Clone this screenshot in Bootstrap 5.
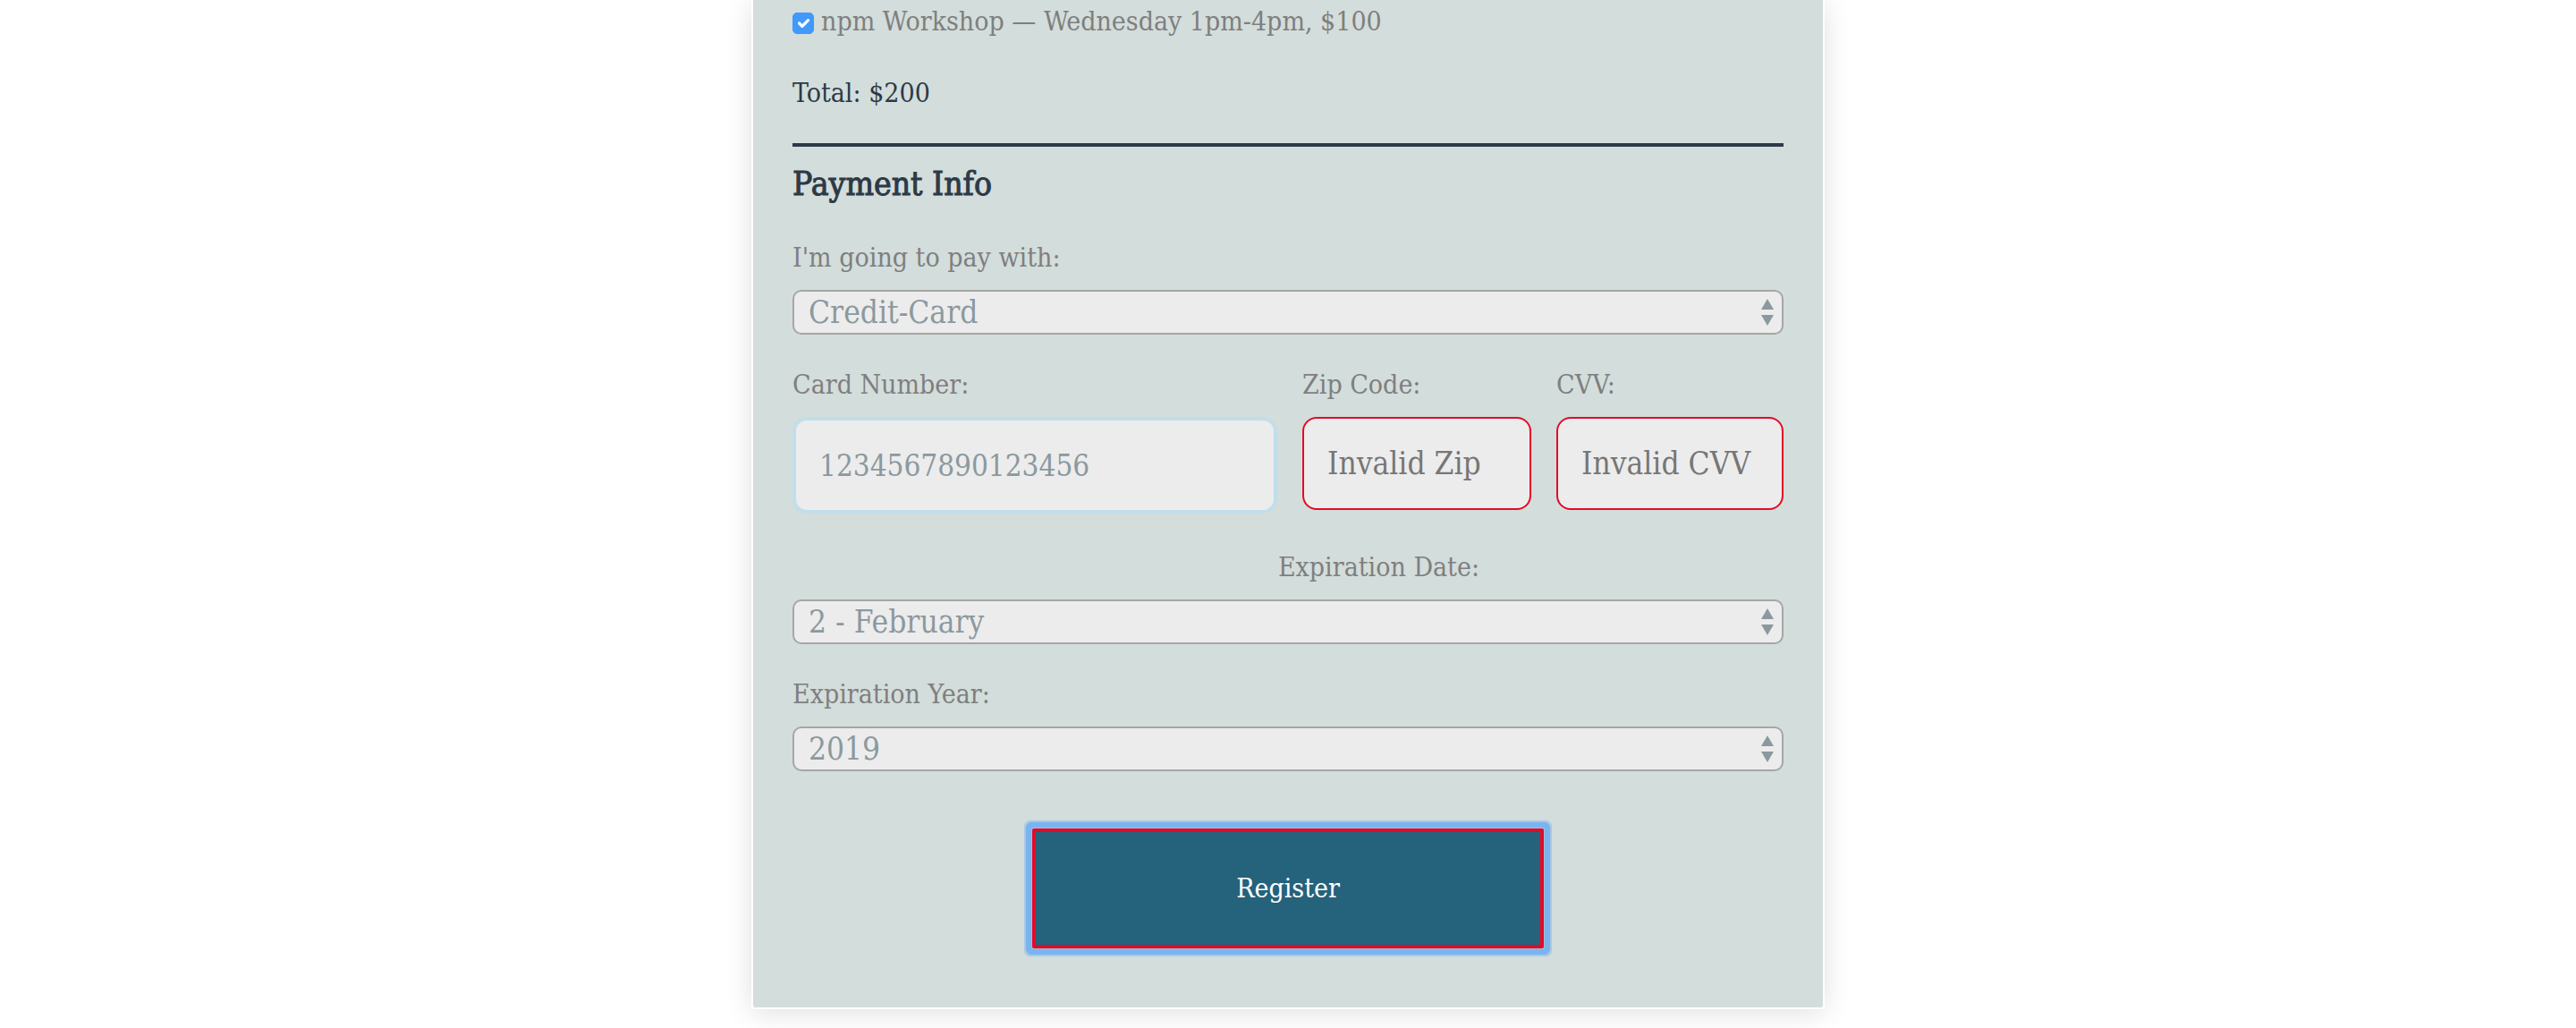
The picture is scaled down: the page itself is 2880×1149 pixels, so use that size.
<!DOCTYPE html>
<html lang="en">
<head>
<meta charset="utf-8">
<meta name="viewport" content="width=device-width, initial-scale=1">
<title>Conference Registration</title>
<link href="https://cdn.jsdelivr.net/npm/bootstrap@5.3.0/dist/css/bootstrap.min.css" rel="stylesheet">
<style>
  body { background: #fff; font-family: "DejaVu Serif Condensed", "DejaVu Serif", serif; color: #2c3a47; }
  .reg-panel { max-width: 1200px; background: #d3dddb; border: 2px solid #fff; border-top: 0; border-radius: 0 0 4px 4px; padding: 4px 44px 66px; box-shadow: 0 4px 30px rgba(0, 0, 0, .13); }
  .reg-text { font-size: 30px; line-height: 40px; }
  .total-line { margin: 24px 0 36px; }
  .reg-panel label { display: block; margin-bottom: 16px; font-size: 30px; line-height: 40px; color: #7f7f7f; }
  .reg-panel .form-check-input { width: 24px; height: 24px; margin: 10px 0 0; border-radius: 5px; }
  .reg-panel .form-check-input:checked { background-color: #4099fb; border-color: #4099fb; }
  .pay-section { border-top: 4px solid #2c3a47; }
  .pay-title { margin: 18px 0 38px; font-size: 37px; line-height: 48px; font-weight: 400; -webkit-text-stroke: 1px currentColor; }
  .reg-panel .form-select { height: 50px; padding: 0 48px 0 16px; border: 2px solid #a6a6a6; border-radius: 10px; background-color: #ececec; color: #8b999f; font-size: 35px; line-height: 46px;
    background-image: url("data:image/svg+xml,%3Csvg xmlns='http://www.w3.org/2000/svg' viewBox='0 0 14 30'%3E%3Cpath fill='%238b999f' d='M7 0l7 12H0zM7 30l7-12H0z'/%3E%3C/svg%3E"); background-size: 14px 30px; background-position: right 9px center; }
  .card-fields { display: grid; grid-template-columns: 542fr 256fr 254fr; column-gap: 28px; margin-bottom: 40px; }
  .reg-panel .form-control { height: 104px; padding: 0 26px; border: 2px solid #e20b27; border-radius: 16px; background: #ececec; color: #8b999f; font-size: 35px; line-height: 46px; }
  .reg-panel .form-control.card-number { height: 108px; border: 4px solid #c1deea; font-size: 33px; }
  .reg-panel .form-control::placeholder { color: #767676; opacity: 1; }
  .field-gap { margin-top: 36px; }
  .exp-label { margin-left: 49%; }
  .submit-row { margin-top: 64px; }
  .reg-panel .reg-submit { width: 572px; max-width: 100%; height: 134px; border: 4px solid #e20b27; border-radius: 2px; background: #25627b; color: #fff; font-size: 30px; line-height: 40px; box-shadow: 0 0 0 1px #9dc0dc, 0 0 0 7px #79b4f0, 0 0 0 9px #a9c9e3; }
</style>
</head>
<body class="min-vh-100">
<main class="reg-panel w-100 mx-auto">
  <form>
    <div class="d-flex align-items-start gap-2">
      <input class="form-check-input flex-shrink-0" type="checkbox" id="npm" checked>
      <label for="npm">npm Workshop — Wednesday 1pm-4pm, $100</label>
    </div>
    <p class="reg-text total-line">Total: $200</p>
    <section class="pay-section">
      <h2 class="pay-title">Payment Info</h2>
      <label for="payment">I'm going to pay with:</label>
      <select class="form-select" id="payment"><option>Credit-Card</option></select>
      <div class="card-fields field-gap">
        <div><label for="cc">Card Number:</label><input class="form-control card-number" type="text" id="cc" value="1234567890123456"></div>
        <div><label for="zip">Zip Code:</label><input class="form-control" type="text" id="zip" placeholder="Invalid Zip"></div>
        <div><label for="cvv">CVV:</label><input class="form-control" type="text" id="cvv" placeholder="Invalid CVV"></div>
      </div>
      <label class="exp-label" for="month">Expiration Date:</label>
      <select class="form-select" id="month"><option>2 - February</option></select>
      <label class="field-gap" for="year">Expiration Year:</label>
      <select class="form-select" id="year"><option>2019</option></select>
    </section>
    <div class="text-center submit-row"><button class="btn reg-submit" type="submit">Register</button></div>
  </form>
</main>
<script src="https://cdn.jsdelivr.net/npm/bootstrap@5.3.0/dist/js/bootstrap.bundle.min.js"></script>
</body>
</html>
